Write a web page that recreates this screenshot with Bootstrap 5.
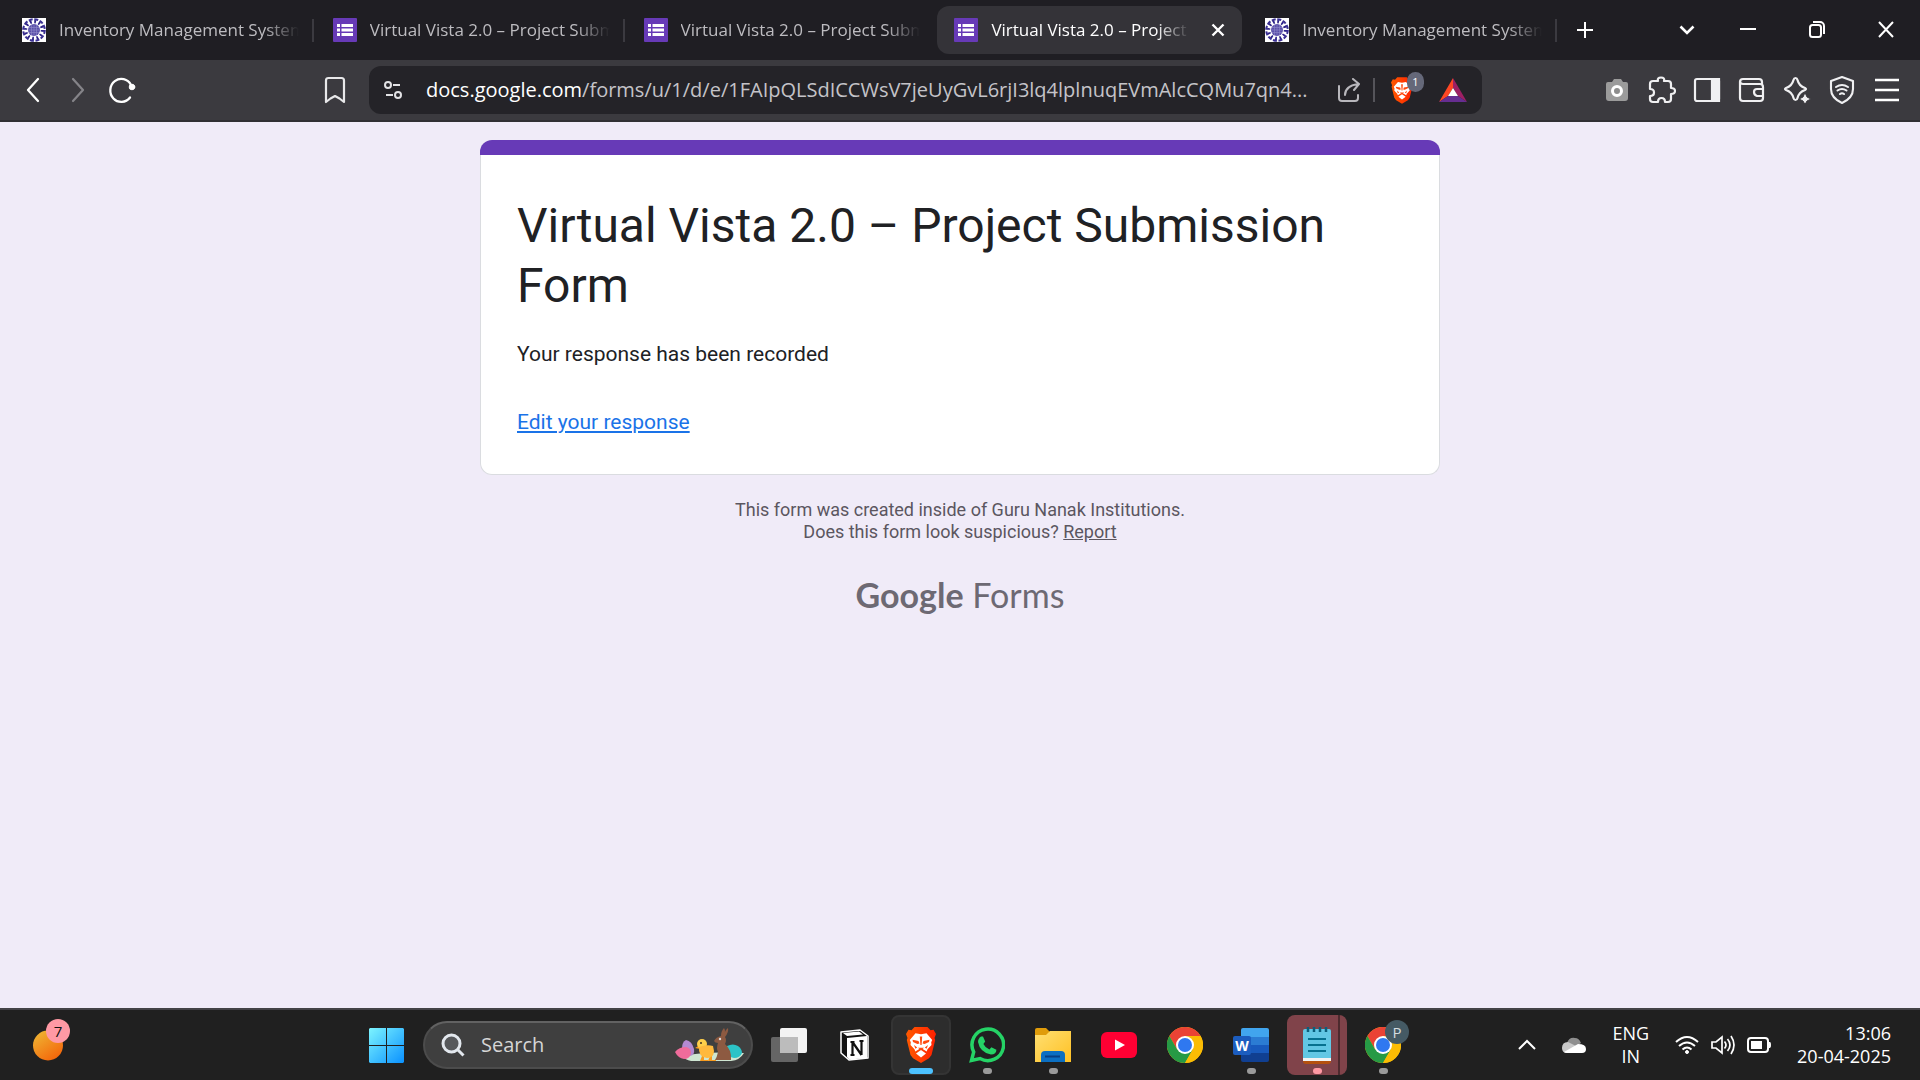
<!DOCTYPE html>
<html lang="en">
<head>
<meta charset="utf-8">
<meta name="viewport" content="width=device-width, initial-scale=1">
<title>Virtual Vista 2.0 – Project Submission Form</title>
<link href="https://cdn.jsdelivr.net/npm/bootstrap@5.3.0/dist/css/bootstrap.min.css" rel="stylesheet">
<style>
:root{--ui:"Open Sans","Noto Sans",sans-serif}
body{font-family:Roboto,sans-serif;background:#f0ebf8;color:#202124}
svg{display:block;flex:none}
button{background:none;border:0;padding:0;color:inherit}
.ui{font-family:var(--ui)}
.tabstrip{height:60px;background:#1f1e23;color:#fff;padding:6px 0 6px 5px}
.tabs{flex:0 1 1548px;gap:6px;min-width:0}
.tab-item{flex:1 1 0;min-width:0;padding:0 17px;border-radius:12px;color:#bdbcc0;font-size:17px;gap:13px;position:relative;text-decoration:none}
.tab-item.current{background:#343338;color:#fff}
.tab-item.ruled::after{content:"";position:absolute;right:-4px;top:13px;height:23px;width:2px;background:#3b3a40}
.tab-title{flex:1 1 0;min-width:0;overflow:hidden;white-space:nowrap;line-height:24px;-webkit-mask-image:linear-gradient(90deg,#000 calc(100% - 34px),transparent);mask-image:linear-gradient(90deg,#000 calc(100% - 34px),transparent)}
.tab-item:not(.current) .tab-title{margin-right:-6px}
.winbtns{margin:-6px 0}
.winbtns button{width:69px;display:flex;align-items:center;justify-content:center}
.winbtns button:first-child{width:52px}
.toolbar{height:62px;background:#3b3a3f;border-bottom:2px solid #302f34;color:#f0f0f2}
.navside{width:369px;padding:0 22px}
.address{flex:0 1 1113px;min-width:0;height:48px;border-radius:12px;background:#242328;padding:0 15px}
.url{flex:1 1 0;min-width:0;font-size:20px;line-height:28px;color:#c4c3c8;white-space:nowrap;overflow:hidden;text-overflow:ellipsis;text-decoration:none}
.url span{color:#fff}
.rule{width:2px;height:24px;background:#55545a;margin:0 16px 0 12px}
.rewards{margin-left:26px}
.count{position:absolute;left:16px;top:-5px;width:17px;height:20px;border-radius:9px;background:#656879;color:#fff;font-size:11px;line-height:19px;text-align:center}
.ext{gap:17px;padding-right:19px}
main{padding-top:18px}
.form-card{width:960px;max-width:100%;border:1px solid #dadce0;border-top:0;border-radius:12px;background:#fff}
.band{height:15px;background:#673ab7;margin:0 -1px;border-radius:12px 12px 0 0}
.form-body{padding:41px 36px 37px}
h1{font-size:48px;line-height:60px;font-weight:400;margin:0 0 23px}
.msg{font-size:21px;line-height:30px;margin:0}
.msg + .msg{margin-top:38px}
.msg a{color:#1a73e8}
.foot{font-size:18px;line-height:22px;color:#5b5660;margin:24px 0 0}
.foot a{color:inherit}
.wordmark{font-family:Lato,sans-serif;color:#6d6973;font-size:34px;line-height:40px}
.taskbar{height:72px;background:#202020;border-top:2px solid #444347;color:#fff}
.tb-left{flex:0 1 353px;padding-left:15px}
.slot{width:66px;height:60px;position:relative;display:flex;align-items:center;justify-content:center}
.slot.run::after{content:"";position:absolute;bottom:1px;width:9px;height:6px;border-radius:3px;background:#9a9a9a}
.slot.front::before{content:"";position:absolute;inset:0 3px;border-radius:8px;background:#2d2d2d;border:2px solid #343434}
.slot.front::after{width:24px;background:#4cc2ff}
.slot.alert-on::before{content:"";position:absolute;inset:0 3px;border-radius:8px;background:linear-gradient(90deg,#80434a 51px,#4d2a2e 51px 53px,#80434a 53px)}
.slot.alert-on::after{background:#ff99a4}
.slot svg{position:relative}
.searchbox{width:330px;height:48px;border-radius:24px;background:#3f3f3f;border:2px solid #4c4c4c;border-top-color:#626262;padding:0 6px 0 16px;margin:0 3px 0 4px}
.searchbox input{flex:1 1 0;min-width:0;background:none;border:0;outline:0;color:#d6d6d6;font-size:20px;padding:0;margin-left:16px}
.searchbox input::placeholder{color:#d6d6d6;opacity:1}
.bubble{position:absolute;width:24px;height:24px;border-radius:50%;font-size:15px;line-height:24px;text-align:center}
.tray{flex:1 1 0;font-size:18px;line-height:23px;padding-right:29px;gap:26px}
</style>
<script src="https://cdn.jsdelivr.net/npm/bootstrap@5.3.0/dist/js/bootstrap.bundle.min.js"></script>
</head>
<body class="d-flex flex-column min-vh-100">
<svg width="0" height="0" class="position-absolute" aria-hidden="true">
<defs>
<symbol id="forms" viewBox="0 0 24 24"><rect width="24" height="24" rx="1" fill="#673ab7"/><g fill="#fff"><path d="M4 6h3v3H4zM4 10.500h3v3H4zM4 15h3v3H4zM8.500 6H20v3H8.500zM8.500 10.500H20v3H8.500zM8.500 15H20v3H8.500z"/></g></symbol>
<symbol id="seal" viewBox="0 0 24 24"><path fill="#fff" d="M0 0h24v24H0z"/><circle cx="12" cy="12" r="10.800" fill="none" stroke="#3a2f92" stroke-width="2" stroke-dasharray="4 1.650"/><circle cx="12" cy="12" r="8.400" fill="none" stroke="#2d2288" stroke-width="3.200" stroke-dasharray="1.800 2.600"/><circle cx="12" cy="12" r="6" fill="#5b51aa"/><path d="M7 9.500h10M6.500 12h11M7 14.500h10M9.500 7v10M12 6.500v11M14.500 7v10" stroke="#928bc9" stroke-width=".6"/></symbol>
<linearGradient id="bg1" x1="0" x2="1"><stop stop-color="#ff5a00"/><stop offset="1" stop-color="#ff2000"/></linearGradient>
<symbol id="lion" viewBox="0 0 30 36"><path fill="url(#bg1)" d="M8.500 0h13l3 3.200 3-.4 2.500 4.200-1.500 4 .7 2-3.700 15-2.500 3.300L15 36l-8-4.700L4.500 28 .8 13l.7-2L0 7l2.500-4.200 3 .4z"/><path fill="#fff" d="M9.500 6.300l5.500 1 5.500-1 5.700 6.700-1 2.200.3 2.800-4 4.300-.8 2.200L15 21l-5.700 3.500-.8-2.200-4-4.300.3-2.800-1-2.200z"/><path fill="#fff" d="M15 23l5 3.400-5 4-5-4z"/><path fill="#ff4a10" d="M6.500 12.800l6 1.200 1 2.600-2.200.4-4.300-2zM23.500 12.800l-6 1.200-1 2.600 2.200.4 4.300-2zM13.800 9.500h2.400l-.6 8.500h-1.200zM12 20.800h6l-3 2.400zM8 18l3.200 2.600-1.800 1.200zM22 18l-3.200 2.600 1.800 1.200z"/></symbol>
<symbol id="chrome" viewBox="0 0 36 36"><circle cx="18" cy="18" r="18" fill="#fbbc04"/><path fill="#ea4335" d="M2.400 9A18 18 0 0 1 33.600 9H18L10.200 22.500z"/><path fill="#269a45" d="M2.400 9A18 18 0 0 0 18 36l7.800-13.500H10.200z"/><path fill="#fbbc04" d="M18 9h15.600A18 18 0 0 1 18 36l7.800-13.500z"/><circle cx="18" cy="18" r="9" fill="#fff"/><circle cx="18" cy="18" r="7" fill="#2f78f0"/></symbol>
</defs></svg>

<header class="ui">
<div class="tabstrip d-flex align-items-stretch">
<nav class="tabs d-flex" aria-label="Tabs">
<a href="#" class="tab-item ruled d-flex align-items-center"><svg width="24" height="24"><use href="#seal"/></svg><span class="tab-title">Inventory Management System</span></a>
<a href="#" class="tab-item ruled d-flex align-items-center"><svg width="24" height="24"><use href="#forms"/></svg><span class="tab-title">Virtual Vista 2.0 – Project Submission</span></a>
<a href="#" class="tab-item d-flex align-items-center"><svg width="24" height="24"><use href="#forms"/></svg><span class="tab-title">Virtual Vista 2.0 – Project Submission</span></a>
<div class="tab-item current d-flex align-items-center"><svg width="24" height="24"><use href="#forms"/></svg><span class="tab-title">Virtual Vista 2.0 – Project Submission</span><button class="ms-2" aria-label="Close tab"><svg width="14" height="14" viewBox="0 0 14 14" stroke="#fff" stroke-width="2.400"><path d="M1.500 1.500l11 11M12.500 1.500l-11 11"/></svg></button></div>
<a href="#" class="tab-item ruled d-flex align-items-center"><svg width="24" height="24"><use href="#seal"/></svg><span class="tab-title">Inventory Management System</span></a>
</nav>
<button class="px-4" aria-label="New tab"><svg width="16" height="16" stroke="#fff" stroke-width="2"><path d="M8 0v16M0 8h16"/></svg></button>
<div class="winbtns d-flex align-items-stretch ms-auto">
<button aria-label="Search tabs"><svg width="16" height="10" fill="none" stroke="#fff" stroke-width="2.600"><path d="M1.500 1.500L8 8l6.500-6.500"/></svg></button>
<button aria-label="Minimize"><svg width="16" height="16" stroke="#fff" stroke-width="2"><path d="M0 7h16"/></svg></button>
<button aria-label="Restore"><svg width="16" height="18" fill="none" stroke="#fff" stroke-width="2"><rect x="1" y="4" width="11" height="12" rx="2.500"/><path d="M4 1h7a4 4 0 0 1 4 4v8"/></svg></button>
<button aria-label="Close"><svg width="16" height="18" stroke="#fff" stroke-width="2"><path d="M1 1l14 15M15 1L1 16"/></svg></button>
</div>
</div>
<div class="toolbar d-flex align-items-center">
<div class="navside d-flex align-items-center">
<button aria-label="Back"><svg width="22" height="26" fill="none" stroke="#fff" stroke-width="2.300" stroke-linecap="round" stroke-linejoin="round"><path d="M16 2L6 13l10 11"/></svg></button>
<button class="ms-4" aria-label="Forward" disabled><svg width="22" height="26" fill="none" stroke="#858489" stroke-width="2.200" stroke-linecap="round" stroke-linejoin="round"><path d="M5 2l10 11L5 24"/></svg></button>
<button class="ms-3" aria-label="Reload"><svg width="30" height="28" fill="none" stroke="#fff" stroke-width="2.300" stroke-linecap="round"><path d="M24 21.500A11 11.500 0 1 1 25 9"/><circle cx="26" cy="11" r="2.800" fill="#fff" stroke-width="1"/></svg></button>
<button class="ms-auto" aria-label="Bookmark"><svg width="24" height="28" fill="none" stroke="#e8e8ea" stroke-width="2.200" stroke-linejoin="round"><path d="M3 4.500q0-2.500 2.500-2.500h13Q21 2 21 4.500V26l-4.500-3.500L12 20l-4.500 2.500L3 26z"/></svg></button>
</div>
<div class="address d-flex align-items-center">
<button aria-label="Site settings"><svg width="18" height="20" fill="none" stroke="#e2e2e5" stroke-width="2"><circle cx="4" cy="5" r="3"/><path d="M9 5h7M2 15h7"/><circle cx="14" cy="15" r="3"/></svg></button>
<a class="url ms-4" href="#"><span>docs.google.com</span>/forms/u/1/d/e/1FAIpQLSdICCWsV7jeUyGvL6rjI3lq4lplnuqEVmAlcCQMu7qn4...</a>
<button class="ms-4" aria-label="Share"><svg width="24" height="24" fill="none" stroke="#b8b7bc" stroke-width="2" stroke-linecap="round" stroke-linejoin="round"><path d="M2 8v12q0 3 3 3h13q3 0 3-3v-3M8 17q0-9 13-11M16 1l6 5-5 6"/></svg></button>
<div class="rule"></div>
<button class="position-relative" aria-label="Brave Shields"><svg width="22" height="27"><use href="#lion"/></svg><span class="count">1</span></button>
<button class="rewards" aria-label="Rewards"><svg width="28" height="24" viewBox="0 0 28 24"><path fill="#ff4724" d="M14 0L0 24l9-6 5-8z"/><path fill="#9e1f63" d="M14 0l14 24-9-6-5-8z"/><path fill="#662d91" d="M0 24h28l-9-6H9z"/><path fill="#fff" d="M14 10l5 8H9z"/></svg></button>
</div>
<div class="ext d-flex align-items-center ms-auto">
<button aria-label="Camera"><svg width="28" height="28"><path fill="#9b9b9b" d="M3 8q0-2 2-2h4l2-3h7l2 3h3q2 0 2 2v14q0 3-3 3H6q-3 0-3-3z"/><circle cx="14" cy="15" r="4.500" fill="#8d8d8d" stroke="#fff" stroke-width="3"/></svg></button>
<button aria-label="Extensions"><svg width="28" height="28" fill="none" stroke="#f0f0f2" stroke-width="2.200" stroke-linejoin="round"><path d="M5 5h5q-1-3.500 3-3.500T16 5h4q3 0 3 3v4q4 0 4 3t-4 3v5q0 3-3 3h-3q0-4-3.500-4T10 26H5q-3 0-3-3v-3q4 0 4-3.500T2 13V8q0-3 3-3z"/></svg></button>
<button aria-label="Sidebar"><svg width="28" height="28" fill="none" stroke="#f0f0f2" stroke-width="2.200"><rect x="2" y="3" width="24" height="22" rx="2"/><path fill="#f0f0f2" d="M19 3h7v22h-7z"/></svg></button>
<button aria-label="Wallet"><svg width="28" height="28" fill="none" stroke="#f0f0f2" stroke-width="2.200" stroke-linejoin="round"><path d="M24 8V6q0-3-3-3H5Q2 3 2 6v16q0 3 3 3h17q3 0 3-3V11q0-3-3-3H5Q2 8 2 5M25 13h-6q-3 0-3 3t3 4h6"/></svg></button>
<button aria-label="Assistant"><svg width="28" height="28"><path fill="none" stroke="#f0f0f2" stroke-width="2.200" stroke-linejoin="round" d="M12.500 2q1.500 0 2 2 1.500 6 7.500 8 2 1 0 2-6 2-7.500 8-.5 2-2 2t-2-2q-1.500-6-7.500-8-2-1 0-2 6-2 7.500-8 .5-2 2-2z"/><path fill="#f0f0f2" stroke="#3b3a3f" d="M22 16.500l2 4.500 4 2-4 2-2 3.500-2-3.500-4-2 4-2z"/></svg></button>
<button aria-label="VPN"><svg width="28" height="28" fill="none" stroke="#f0f0f2" stroke-width="2.100" stroke-linejoin="round" stroke-linecap="round"><path d="M14 1l11 4v8q0 9-11 14Q3 22 3 13V5z"/><path d="M8 11q6-4 12 0M9.500 14.500q4.500-3 9 0M12 18q2-1.500 4 0"/></svg></button>
<button aria-label="Menu"><svg width="28" height="28" stroke="#fff" stroke-width="2.300"><path d="M2 4h24M2 14h24M2 24h24"/></svg></button>
</div>
</div>
</header>

<main class="flex-grow-1 d-flex flex-column align-items-center">
<section class="form-card">
<div class="band"></div>
<div class="form-body">
<h1>Virtual Vista 2.0 – Project Submission Form</h1>
<p class="msg">Your response has been recorded</p>
<p class="msg"><a href="#">Edit your response</a></p>
</div>
</section>
<p class="foot text-center">This form was created inside of Guru Nanak Institutions.<br>Does this form look suspicious? <a href="#">Report</a></p>
<div class="wordmark mt-4 pt-2"><b>Google</b> Forms</div>
</main>

<footer class="taskbar ui d-flex align-items-center">
<div class="tb-left d-flex"><button class="slot" aria-label="Weather"><svg width="30" height="31"><defs><linearGradient id="sun" x1="0" y1="0" x2=".7" y2="1"><stop stop-color="#eebc37"/><stop offset="1" stop-color="#f4660a"/></linearGradient></defs><circle cx="15" cy="15.500" r="15" fill="url(#sun)"/></svg><span class="bubble" style="left:31px;top:4px;background:#ff99a4;color:#111">7</span></button></div>
<nav class="d-flex align-items-center" aria-label="Apps">
<button class="slot" aria-label="Start"><svg width="35" height="35"><defs><linearGradient id="win" x1="0" y1="0" x2="35" y2="35" gradientUnits="userSpaceOnUse"><stop stop-color="#7df5ff"/><stop offset="1" stop-color="#0a91ff"/></linearGradient></defs><path fill="url(#win)" d="M1 0h16v17H0V1zM18 0h16l1 1v16H18zM0 18h17v17H1l-1-1zM18 18h17v16l-1 1H18z"/></svg></button>
<label class="searchbox d-flex align-items-center"><svg width="24" height="24" fill="none" stroke="#e3e8ee" stroke-width="3"><circle cx="10.500" cy="10.500" r="8.500" fill="#56585b"/><path d="M16.500 16.500l6 6"/></svg><input type="text" placeholder="Search" aria-label="Search">
<svg width="70" height="36" viewBox="0 0 70 36"><path fill="#cfe6d2" d="M8 29q20-5 61-3-4 7-13 8H16q-6-1-8-5z"/><path fill="#b48ad2" d="M11 13q6 1 8 9 1 6-4 7-8 0-8-8 0-6 4-8z"/><path fill="#ef6c9b" d="M0 25q4-5 11-5 5 1 5 6-1 6-7 6-6-1-9-7z"/><path fill="#2cc3c7" d="M52 19q6-3 11 0 4 3 4 7-2 5-8 5-6-1-7-6z"/><path fill="#f79a1d" d="M20 21l5-3v4zM27 29h2v4h4v1h-8zM35 29h2v4h4v1h-8z"/><circle cx="27" cy="17" r="5" fill="#ffcf4a"/><path fill="#ffb93d" d="M24 20q8-3 14-1l1 5q0 7-7 7-9-1-8-11z"/><circle cx="26" cy="16" r="1" fill="#432"/><path fill="#8d5a41" d="M39 14q2-4 7-5 0-5 3-8 2 3 0 7 1-5 4-7 1 4-3 9 2 3 0 7 7 6 6 16H40q2-3 3-8-2-4 0-9-3 0-4-2z"/><circle cx="45" cy="12" r="1.200" fill="#ddd"/></svg></label>
<button class="slot" aria-label="Task view"><svg width="36" height="34"><rect x="9" width="27" height="25" rx="2" fill="#f3f3f3"/><rect y="9" width="27" height="25" rx="2" fill="#777" fill-opacity=".8"/><path fill="#bcbcbc" d="M9 9h18v16H9z"/></svg></button>
<button class="slot" aria-label="Notion"><svg width="30" height="32" viewBox="0 0 30 32"><path fill="#111" stroke="#fff" stroke-width="1.500" stroke-linejoin="round" d="M1 3l19-2 8 6v22L9 31l-8-7z"/><path fill="#fff" d="M7 9l20-2v22L9 30.500 7 28z"/><path fill="#fff" d="M3 4l16-1.500 4 3L7 7z"/><path fill="#111" d="M9 7l15-1.500"/><path d="M10.500 13h4M12.500 13v13M10.500 26h4M12.500 13l9 13M21.500 12v14M19.500 12h4" stroke="#111" stroke-width="2.200"/></svg></button>
<button class="slot front run" aria-label="Brave"><svg width="30" height="36"><use href="#lion"/></svg></button>
<button class="slot run" aria-label="WhatsApp"><svg width="36" height="36" viewBox="0 0 36 36"><path fill="none" stroke="#25d366" stroke-width="3.500" d="M2.500 33.500l2.200-8.500A15.800 15.800 0 1 1 11 31.600z"/><path fill="#25d366" d="M12 9.500h2l2.200 5-1.800 2.500q2 4 6 5.500l2-2.200 5 2.400q0 4.500-5.500 4.800Q11 25.500 9 15q0-3.500 3-5.500z"/></svg></button>
<button class="slot run" aria-label="File Explorer"><svg width="36" height="36"><defs><linearGradient id="fol" x1="0" y1="0" x2="1" y2="1"><stop stop-color="#ffdf72"/><stop offset="1" stop-color="#ffc124"/></linearGradient></defs><path fill="#e09c0a" d="M0 3q0-2 2-2h9l4 4-4 6H0z"/><path fill="url(#fol)" d="M0 8h11l4-4h21v31H0z"/><path fill="#0b6fc2" d="M6 35V28q0-4 4-4h16q4 0 4 4v7z"/><path d="M10 29.500h15" stroke="#073f83" stroke-width="2"/></svg></button>
<button class="slot" aria-label="YouTube"><svg width="36" height="26"><rect width="36" height="26" rx="6" fill="#ff0033"/><path fill="#fff" d="M14 7.500l10 5.500-10 5.500z"/></svg></button>
<button class="slot" aria-label="Chrome"><svg width="36" height="36"><use href="#chrome"/></svg></button>
<button class="slot run" aria-label="Word"><svg width="36" height="34"><path fill="#41a5ee" d="M8 2q0-2 2-2h24q2 0 2 2v7H8z"/><path fill="#2b7cd3" d="M8 9h28v8H8z"/><path fill="#185abd" d="M8 17h28v8H8z"/><path fill="#103f91" d="M8 25h28v7q0 2-2 2H10q-2 0-2-2z"/><rect y="8" width="18" height="19" rx="2" fill="#1c5dbf"/><text x="9" y="23" text-anchor="middle" fill="#fff" font-family="Open Sans,sans-serif" font-weight="700" font-size="14">W</text></svg></button>
<button class="slot run alert-on" aria-label="Notepad"><svg width="28" height="37"><path fill="#b4500f" d="M0 30h28v4q0 3-3 3H3q-3 0-3-3z"/><path fill="#f2f2f2" d="M0 28h28v6H0z"/><path fill="#62c7e4" d="M0 4q0-2 2-2h24q2 0 2 2v27H0z"/><path d="M5 12h18M5 18h18M5 24h18" stroke="#07718f" stroke-width="2"/><path d="M5 0v5M11 0v5M17 0v5M23 0v5" stroke="#0a5f7c" stroke-width="2.500"/></svg></button>
<button class="slot run" aria-label="Chrome, profile P"><svg width="36" height="36"><use href="#chrome"/></svg><span class="bubble" style="left:35px;top:5px;background:#455a64;color:#d5dde0">P</span></button>
</nav>
<div class="tray d-flex align-items-center justify-content-end">
<button aria-label="Hidden icons"><svg width="18" height="12" fill="none" stroke="#fff" stroke-width="2"><path d="M1 10l8-8 8 8"/></svg></button>
<button aria-label="OneDrive"><svg width="24" height="18"><path fill="#8f8f8f" d="M5 7q2-6 8-5 4 0 6 5l-7 5z"/><path fill="#c9c9c9" d="M0 12q0-6 6-6l8 4-9 7q-5 0-5-5z"/><path fill="#fff" d="M2 16l14-8q8 0 8 5 0 4-4 4H5q-2 0-3-1z"/></svg></button>
<button class="text-center" aria-label="Language">ENG<br>IN</button>
<button class="d-flex" style="gap:12px" aria-label="Network, volume, battery"><svg width="24" height="20" fill="none" stroke="#fff" stroke-width="2"><path d="M1 7q11-10 22 0M4 11q8-7 16 0M7.500 14.500q4.500-4 9 0"/><circle cx="12" cy="17" r="1.500" fill="#fff" stroke-width="1"/></svg><svg width="24" height="20" fill="none" stroke="#fff" stroke-width="1.700"><path d="M1 7h4l6-5v16l-6-5H1zM13.500 6.500q3 3.500 0 7M16.500 4q5 6 0 12M20 1q6 9 0 18"/></svg><svg width="24" height="20" fill="none" stroke="#fff" stroke-width="2"><rect x="1" y="3" width="20" height="14" rx="3"/><path fill="#fff" stroke="none" d="M4 6h11v8H4zM21 7h2q1 0 1 3t-1 3h-2z"/></svg></button>
<button class="text-end" aria-label="Clock">13:06<br>20-04-2025</button>
</div>
</footer>
</body>
</html>
